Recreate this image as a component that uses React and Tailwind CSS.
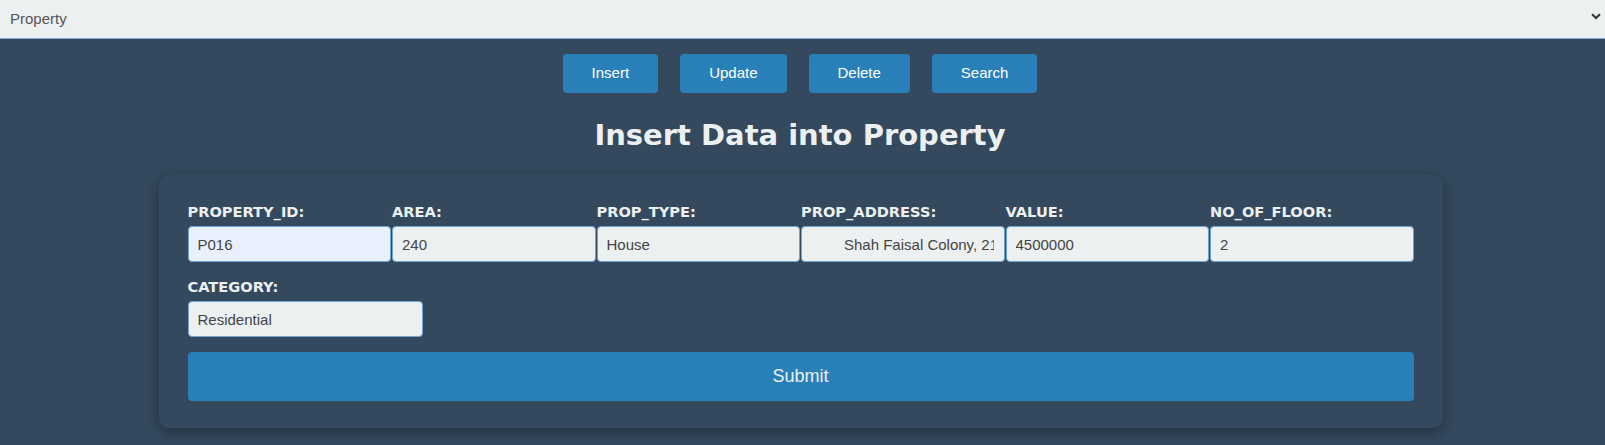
import { useState } from 'react';

const ACTIONS = ['Insert', 'Update', 'Delete', 'Search'];

const FIELDS = [
  { name: 'PROPERTY_ID', value: 'P016', filled: true },
  { name: 'AREA', value: '240' },
  { name: 'PROP_TYPE', value: 'House' },
  { name: 'PROP_ADDRESS', value: 'Shah Faisal Colony, 21 Block', indent: true },
  { name: 'VALUE', value: '4500000' },
  { name: 'NO_OF_FLOOR', value: '2' },
];

function Field({ name, value, filled, indent, className = '' }) {
  return (
    <div className={`flex flex-col ${className}`}>
      <label className="mb-[5px] text-[14.6px] leading-[19px] font-bold uppercase text-[#ecf0f1] font-['DejaVu_Sans',sans-serif]">
        {name}:
      </label>
      <input
        defaultValue={value}
        className={`h-[36px] w-full rounded-[4px] border border-[#6fa6d3] pr-[10px] text-[15px] text-[#444] outline-none font-['Liberation_Sans',Arial,sans-serif] ${
          filled ? 'bg-[#e8f0fe]' : 'bg-[#ecf0f1]'
        } ${indent ? 'pl-[42px]' : 'pl-[9px]'}`}
      />
    </div>
  );
}

export default function App() {
  const [table] = useState('Property');

  return (
    <div className="min-h-[445px] w-full bg-[#34495e] font-['Liberation_Sans',Arial,sans-serif]">
      {/* table picker */}
      <div className="relative h-[39px] w-full border-b border-[#7fa9cc] bg-[#ecf0f1]">
        <div className="flex h-full items-center pl-[10px] text-[15px] text-[#555]">{table}</div>
        <svg
          viewBox="0 0 10 7"
          className="absolute right-[4px] top-[13px] h-[7px] w-[10px] text-[#333]"
          aria-hidden
        >
          <path d="M1 1.2 L5 5 L9 1.2" fill="none" stroke="currentColor" strokeWidth="2" />
        </svg>
      </div>

      {/* actions */}
      <div className="mt-[15px] flex justify-center gap-[22px] pr-[5px]">
        {ACTIONS.map(a => (
          <button
            key={a}
            className="h-[39px] rounded-[4px] bg-[#2980b9] px-[29px] text-[15px] text-white"
          >
            {a}
          </button>
        ))}
      </div>

      <h1 className="mt-[22px] pr-[5px] text-center text-[29px] leading-[40px] font-bold text-[#ecf0f1] font-['DejaVu_Sans',sans-serif]">
        Insert Data into Property
      </h1>

      {/* form card */}
      <div className="mx-auto mt-[20px] w-[80%] -translate-x-[2px] rounded-[10px] bg-[#34495e] px-[29px] pt-[27px] pb-[27px] shadow-[0_4px_14px_rgba(0,0,0,0.35)]">
        <div className="grid grid-cols-6 gap-x-px">
          {FIELDS.map(f => (
            <Field key={f.name} {...f} />
          ))}
        </div>
        <Field name="CATEGORY" value="Residential" className="mt-[15px] w-[235px]" />
        <button className="mt-[15px] h-[49px] w-full rounded-[4px] bg-[#2980b9] text-[18px] text-[#ecf0f1]">
          Submit
        </button>
      </div>
    </div>
  );
}
